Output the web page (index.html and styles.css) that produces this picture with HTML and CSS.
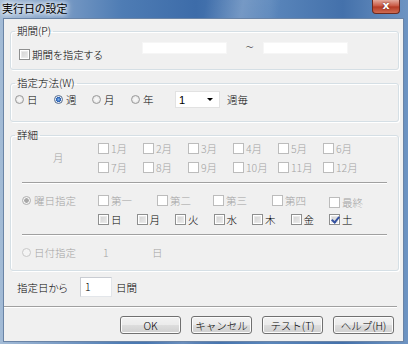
FILE: index.html
```html
<!DOCTYPE html>
<html lang="ja">
<head>
    <meta charset="UTF-8">
    <title>実行日の設定</title>
    <link rel="stylesheet" href="styles.css">
</head>
<body>
    <div class="window">
        <div class="titlebar">
            <span class="title">実行日の設定</span>
            <span class="close">x</span>
        </div>
        <div class="client">
            <!-- 期間 -->
            <fieldset class="group group-period">
                <legend>期間(P)</legend>
                <div class="period-row">
                    <label class="chk period-chk"><span class="box"></span>期間を指定する</label>
                    <span class="field field-from"></span>
                    <span class="tilde">~</span>
                    <span class="field field-to"></span>
                </div>
            </fieldset>

            <!-- 指定方法 -->
            <fieldset class="group group-method">
                <legend>指定方法(W)</legend>
                <div class="method-row">
                    <label class="rad rad-day"><span class="dot"></span>日</label>
                    <label class="rad rad-week sel"><span class="dot"></span>週</label>
                    <label class="rad rad-month"><span class="dot"></span>月</label>
                    <label class="rad rad-year"><span class="dot"></span>年</label>
                    <span class="select">1<span class="arrow"></span></span>
                    <span class="unit">週毎</span>
                </div>
            </fieldset>

            <!-- 詳細 -->
            <fieldset class="group group-detail">
                <legend>詳細</legend>
                <div class="section months">
                    <div class="side side-month off-text">月</div>
                    <div class="month-grid">
                        <label class="chk off"><span class="box"></span>1月</label>
                        <label class="chk off"><span class="box"></span>2月</label>
                        <label class="chk off"><span class="box"></span>3月</label>
                        <label class="chk off"><span class="box"></span>4月</label>
                        <label class="chk off"><span class="box"></span>5月</label>
                        <label class="chk off"><span class="box"></span>6月</label>
                        <label class="chk off"><span class="box"></span>7月</label>
                        <label class="chk off"><span class="box"></span>8月</label>
                        <label class="chk off"><span class="box"></span>9月</label>
                        <label class="chk off"><span class="box"></span>10月</label>
                        <label class="chk off"><span class="box"></span>11月</label>
                        <label class="chk off"><span class="box"></span>12月</label>
                    </div>
                </div>
                <div class="rule"></div>
                <div class="section weekday">
                    <div class="side">
                        <label class="rad off sel"><span class="dot"></span>曜日指定</label>
                    </div>
                    <div class="week-rows">
                        <div class="ordinals">
                            <label class="chk off"><span class="box"></span>第一</label>
                            <label class="chk off"><span class="box"></span>第二</label>
                            <label class="chk off"><span class="box"></span>第三</label>
                            <label class="chk off"><span class="box"></span>第四</label>
                            <label class="chk off last"><span class="box"></span>最終</label>
                        </div>
                        <div class="days">
                            <label class="chk"><span class="box"></span>日</label>
                            <label class="chk"><span class="box"></span>月</label>
                            <label class="chk"><span class="box"></span>火</label>
                            <label class="chk"><span class="box"></span>水</label>
                            <label class="chk"><span class="box"></span>木</label>
                            <label class="chk"><span class="box"></span>金</label>
                            <label class="chk checked"><span class="box"></span>土</label>
                        </div>
                    </div>
                </div>
                <div class="rule"></div>
                <div class="section dates">
                    <div class="side">
                        <label class="rad off"><span class="dot"></span>日付指定</label>
                    </div>
                    <span class="day-num off-text">1</span>
                    <span class="day-unit off-text">日</span>
                </div>
            </fieldset>

            <div class="span-row">
                <span class="span-label">指定日から</span>
                <span class="span-input">1</span>
                <span class="span-unit">日間</span>
            </div>

            <div class="rule bottom-rule"></div>

            <div class="buttons">
                <button class="btn">OK</button>
                <button class="btn">キャンセル</button>
                <button class="btn">テスト(T)</button>
                <button class="btn">ヘルプ(H)</button>
            </div>
        </div>
    </div>
</body>
</html>
```

FILE: styles.css
```css
* {
    box-sizing: border-box;
}

body {
    margin: 0;
    font-family: "Noto Sans CJK JP", "Noto Sans", sans-serif;
    font-size: 10.5px;
    font-weight: 300;
    font-feature-settings: "palt";
    color: #000;
}

.window {
    width: 408px;
    height: 344px;
    display: flex;
    flex-direction: column;
    background:
        linear-gradient(100deg, rgba(255, 255, 255, 0) 44%, rgba(255, 255, 255, 0.22) 52%, rgba(255, 255, 255, 0) 60%),
        linear-gradient(to right, #a3bbd6 0%, #7c9dc6 14%, #4e7cb4 30%, #3d6ca9 48%, #5a86bb 66%, #4471ab 84%, #6e94c2 100%);
}

.titlebar {
    height: 18px;
    display: flex;
    justify-content: space-between;
    align-items: flex-start;
    padding: 0 8px 0 2px;
}

.title {
    font-size: 11px;
    font-weight: 400;
    line-height: 17px;
    text-shadow: 0 0 4px #fff, 0 0 6px #fff, 0 0 8px #fff;
}

.close {
    width: 28px;
    height: 14px;
    border: 1px solid #6d2a1f;
    border-top: none;
    border-radius: 0 0 4px 4px;
    background: linear-gradient(#e3a99c, #c8553f 48%, #b43a24 52%, #cf6c52);
    color: #fff;
    font: bold 11px "DejaVu Sans", sans-serif;
    line-height: 12px;
    text-align: center;
    text-shadow: 0 0 2px #5a1a10;
}

.client {
    flex: 1;
    margin: 0 4px 2px 3px;
    border: 1px solid #6a84a6;
    background: #f0f0f0;
}

/* グループボックス */
.group {
    margin: 7px 4px 0 6px;
    padding: 0;
    min-width: 0;
    border: 1px solid #d5dfe5;
    border-radius: 3px;
    box-shadow: inset 1px 1px 0 #fff, 1px 1px 0 #fff;
}

.group legend {
    margin-left: 4px;
    padding: 0 2px;
    font-size: 10.5px;
    line-height: 12px;
}

.group-period {
    margin-top: 6px;
}

/* チェックボックス */
.chk {
    display: flex;
    align-items: center;
    height: 14px;
    white-space: nowrap;
}

.chk .box {
    width: 11px;
    height: 11px;
    margin-right: 2px;
    border: 1px solid #8e8f8f;
    background: linear-gradient(135deg, #cfcfcf, #eeeeee);
    box-shadow: inset 0 0 0 1px #fff, inset 0 0 0 2px #e8e8e8;
    position: relative;
}

.chk.off {
    color: #a3a3a3;
}

.chk.off .box {
    border-color: #bcbcbc;
    background: #fff;
    box-shadow: none;
}

.chk.checked .box::after {
    content: "";
    position: absolute;
    left: 3px;
    top: 0;
    width: 3px;
    height: 6px;
    border: solid #3552a0;
    border-width: 0 2px 2px 0;
    transform: rotate(40deg);
}

/* ラジオボタン */
.rad {
    display: flex;
    align-items: center;
    white-space: nowrap;
}

.rad .dot {
    width: 9px;
    height: 9px;
    margin-right: 3px;
    border: 1px solid #9a9a9a;
    border-radius: 50%;
    background: radial-gradient(circle, #f6f6f6 30%, #d4d4d4 100%);
}

.rad.sel .dot {
    border-color: #5a6f8f;
    background: radial-gradient(circle, #7fb2ea 0%, #2d62b4 45%, #e6eef8 55%, #d0d8e2 100%);
}

.rad.off {
    color: #a3a3a3;
}

.rad.off .dot {
    border-color: #c8c8c8;
    background: #f4f4f4;
}

.rad.off.sel .dot {
    border-color: #b0b0b0;
    background: radial-gradient(circle, #a8a8a8 40%, #f4f4f4 52%);
}

.off-text {
    color: #a3a3a3;
}

.field {
    display: block;
    width: 85px;
    height: 12px;
    background: #fff;
    border: 1px solid #f6f6f6;
}

/* 期間 */
.period-row {
    display: flex;
    align-items: flex-start;
    height: 32px;
    padding: 5px 0 0 8px;
}

.period-chk {
    width: 123px;
    margin-top: 5px;
}

.tilde {
    width: 10px;
    margin: 0 8px 0 18px;
    font-family: "DejaVu Sans", sans-serif;
    font-size: 11px;
    line-height: 12px;
}

/* 指定方法 */
.method-row {
    display: flex;
    align-items: center;
    height: 32px;
    padding: 0 0 11px 4px;
}

.method-row .rad {
    height: 17px;
}

.rad-day,
.rad-month {
    width: 39px;
}

.rad-week {
    width: 38px;
}

.rad-year {
    width: 44px;
}

.select {
    display: flex;
    align-items: center;
    justify-content: space-between;
    width: 45px;
    height: 17px;
    padding: 0 6px 0 3px;
    background: #fff;
    border: 1px solid #e2e2e2;
    font-family: "Liberation Sans", sans-serif;
    font-size: 11px;
}

.arrow {
    width: 0;
    height: 0;
    border-left: 3px solid transparent;
    border-right: 3px solid transparent;
    border-top: 3px solid #000;
}

.unit {
    margin-left: 7px;
}

/* 詳細 */
.group-detail {
    padding-bottom: 11px;
}

.section {
    display: flex;
    padding-left: 11px;
}

.side {
    width: 76px;
    flex: none;
}

.side-month {
    display: flex;
    align-items: center;
    padding-left: 31px;
}

.month-grid {
    display: grid;
    grid-template-columns: repeat(6, 45px);
    grid-auto-rows: 14px;
    row-gap: 5px;
}

.rule {
    height: 2px;
    margin: 8px 11px 0;
    border-top: 1px solid #a0a0a0;
    border-bottom: 1px solid #fff;
}

.weekday {
    margin-top: 9px;
}

.weekday .side .rad {
    height: 14px;
}

.week-rows {
    display: flex;
    flex-direction: column;
    gap: 3px;
}

.ordinals {
    display: grid;
    grid-template-columns: 59px 56px 59px 57px auto;
}

.ordinals .last {
    margin-top: 2px;
}

.days {
    display: grid;
    grid-template-columns: repeat(7, 38.5px);
}

.dates {
    margin-top: 9px;
    height: 14px;
    align-items: center;
}

.dates .side .rad {
    height: 14px;
}

.day-num {
    width: 54px;
    padding-left: 5px;
}

/* 指定日から */
.span-row {
    display: flex;
    align-items: center;
    height: 20px;
    margin-top: 6px;
    padding-left: 13px;
}

.span-label {
    width: 63px;
}

.span-input {
    width: 32px;
    height: 20px;
    padding-left: 4px;
    line-height: 18px;
    background: #fff;
    border: 1px solid #c9ccd2;
    border-right-color: #e3e6ea;
    border-bottom-color: #e3e6ea;
}

.span-unit {
    margin-left: 4px;
}

.bottom-rule {
    margin: 9px 6px 0 0;
}

/* ボタン */
.buttons {
    display: flex;
    justify-content: flex-end;
    gap: 10px;
    margin-top: 8px;
    padding-right: 9px;
}

.btn {
    width: 61px;
    height: 18px;
    padding: 0;
    border: 1px solid #707070;
    border-radius: 3px;
    background: linear-gradient(#f2f2f2, #ebebeb 48%, #dddddd 52%, #cfcfcf);
    box-shadow: inset 0 0 0 1px #fcfcfc;
    font-family: inherit;
    font-size: 10.5px;
    font-weight: 300;
    color: #000;
}
```
